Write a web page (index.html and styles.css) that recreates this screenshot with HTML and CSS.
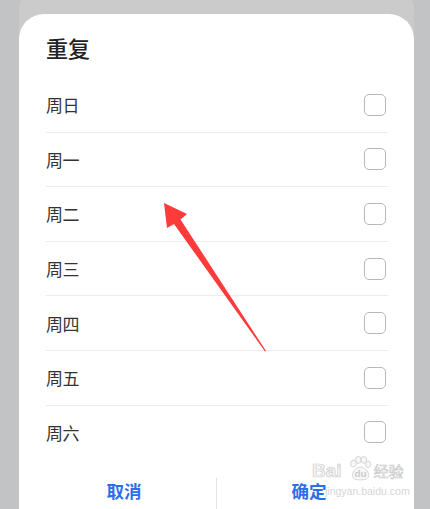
FILE: index.html
```html
<!DOCTYPE html>
<html lang="zh-CN">
<head>
<meta charset="utf-8">
<title>重复</title>
<link rel="stylesheet" href="styles.css">
</head>
<body>
<div class="backdrop">
  <div class="sheet-back">
    <div class="dialog">
      <h1 class="title">重复</h1>
      <ul class="days">
        <li class="day"><span class="label">周日</span><span class="check"></span></li>
        <li class="day"><span class="label">周一</span><span class="check"></span></li>
        <li class="day"><span class="label">周二</span><span class="check"></span></li>
        <li class="day"><span class="label">周三</span><span class="check"></span></li>
        <li class="day"><span class="label">周四</span><span class="check"></span></li>
        <li class="day"><span class="label">周五</span><span class="check"></span></li>
        <li class="day"><span class="label">周六</span><span class="check"></span></li>
      </ul>
      <div class="actions">
        <button class="btn">取消</button>
        <span class="divider"></span>
        <button class="btn">确定</button>
      </div>
    </div>
  </div>
</div>
<svg class="arrow" width="430" height="509" viewBox="0 0 430 509">
  <polygon points="164,203 187,214 180.5,219.5 266,351 265,351.5 174,224 167,228" fill="#fd3b3b"/>
</svg>
<div class="watermark">
  <div class="wm-top">
    <span class="wm-bai">Bai</span>
    <svg class="wm-paw" width="26" height="26" viewBox="0 0 24 24">
      <g fill="#f7f7f7" stroke="#cfcfcf" stroke-width="0.8">
        <ellipse cx="6" cy="8" rx="2.6" ry="3.2"/>
        <ellipse cx="10.5" cy="4.5" rx="2.6" ry="3.2"/>
        <ellipse cx="15.5" cy="4.5" rx="2.6" ry="3.2"/>
        <ellipse cx="19.5" cy="8.5" rx="2.4" ry="3"/>
        <path d="M5 19c0-4 4-8 7.5-8s7.5 4 7.5 8c0 3-3 4-7.5 4S5 22 5 19z"/>
      </g>
      <text x="12.5" y="20.5" class="wm-du">du</text>
    </svg>
    <span class="wm-jy">经验</span>
  </div>
  <div class="wm-url">jingyan.baidu.com</div>
</div>
</body>
</html>
```

FILE: styles.css
```css
html, body {
  margin: 0;
  padding: 0;
}
body {
  width: 430px;
  height: 509px;
  overflow: hidden;
  background: #c2c3c5;
  font-family: "Noto Sans CJK SC", "Noto Sans", sans-serif;
  position: relative;
}
.backdrop {
  padding: 0 16px 0 19px;
}
.sheet-back {
  margin-top: -10px;
  padding-top: 24px;
  background: #cbcbcb;
  border-radius: 20px 20px 0 0;
}
.dialog {
  background: #ffffff;
  border-radius: 25px 25px 0 0;
  padding: 18px 0 0;
  height: 520px;
  box-sizing: border-box;
}
.title {
  margin: 0;
  padding: 0 27px;
  font-size: 22px;
  line-height: 30px;
  font-weight: 500;
  color: #222222;
}
.days {
  list-style: none;
  margin: 16px 26px 0 27px;
  padding: 0;
}
.day {
  display: flex;
  align-items: center;
  justify-content: space-between;
  height: 53.6px;
  border-bottom: 1px solid #ececec;
}
.day:last-child {
  border-bottom: none;
}
.label {
  font-size: 17px;
  color: #333333;
  letter-spacing: -0.5px;
}
.check {
  width: 20px;
  height: 20px;
  border: 1.5px solid #b9b9b9;
  border-radius: 5px;
  margin-right: 2px;
}
.actions {
  display: grid;
  grid-template-columns: 1fr 1px 1fr;
  margin: 9px 13px 0 13px;
  align-items: start;
}
.btn {
  border: none;
  background: none;
  padding: 0;
  height: 44px;
  font-family: "Noto Sans CJK SC", sans-serif;
  font-size: 17.5px;
  font-weight: 700;
  color: #2b6fe9;
}
.divider {
  width: 1px;
  height: 40px;
  margin-top: 10px;
  background: #e3e3e3;
}
.arrow {
  position: absolute;
  left: 0;
  top: 0;
  pointer-events: none;
}
.watermark {
  position: absolute;
  left: 312px;
  top: 452px;
  width: 96px;
}
.wm-top {
  display: flex;
  align-items: flex-end;
  height: 29px;
}
.wm-bai {
  font-family: "Liberation Sans", Arial, sans-serif;
  font-weight: 700;
  font-size: 19px;
  line-height: 19px;
  color: #f6f6f6;
  -webkit-text-stroke: 0.7px #cccccc;
  margin-bottom: 1px;
}
.wm-paw {
  margin: 0 1px 0 5px;
}
.wm-du {
  font-family: "Liberation Sans", Arial, sans-serif;
  font-size: 9px;
  font-weight: 700;
  fill: #cccccc;
  text-anchor: middle;
}
.wm-jy {
  font-size: 15px;
  line-height: 19px;
  color: #f6f6f6;
  -webkit-text-stroke: 0.6px #c8c8c8;
  margin-bottom: 1px;
}
.wm-url {
  font-family: "Liberation Sans", Arial, sans-serif;
  font-size: 10.5px;
  line-height: 14px;
  color: #d6d6d6;
  margin-left: 13px;
  margin-top: 3px;
}
```
